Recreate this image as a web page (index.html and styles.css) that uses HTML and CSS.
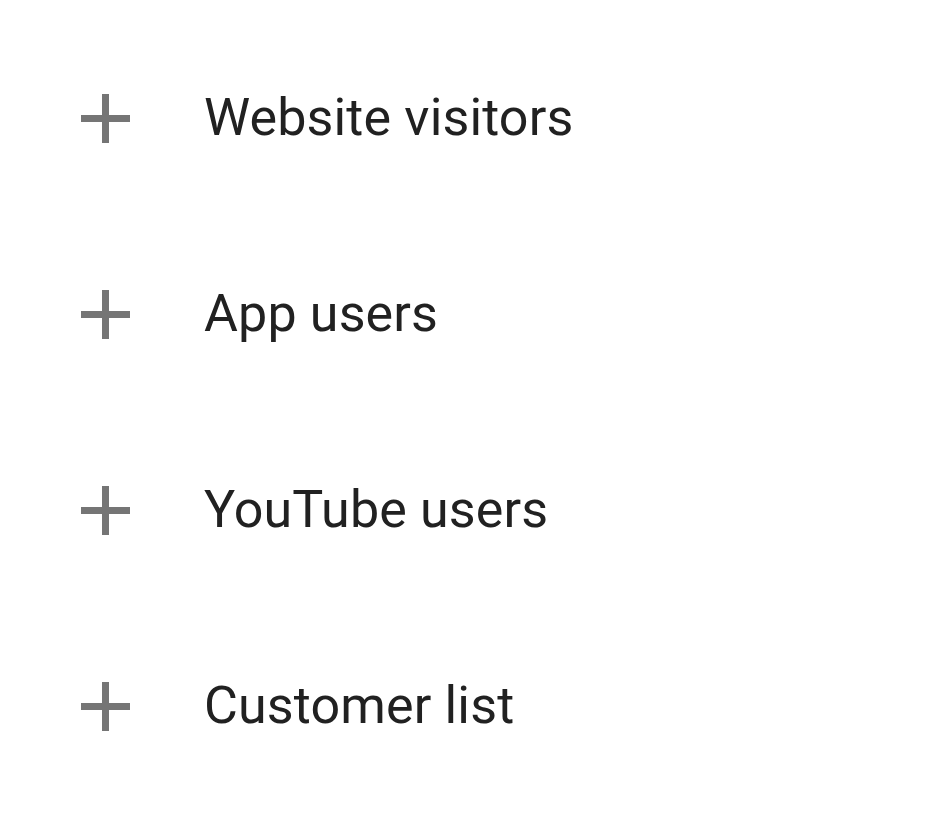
FILE: index.html
```html
<!DOCTYPE html>
<html lang="en">

<head>
    <meta charset="UTF-8">
    <meta name="viewport" content="width=device-width, initial-scale=1.0">
    <title>Audiences</title>
    <link rel="stylesheet" href="styles.css">
</head>

<body>
    <ul class="audience-list">
        <li class="audience-item">
            <svg class="add-icon" viewBox="0 0 49 49"><path d="M21 0h7v21h21v7H28v21h-7V28H0v-7h21z" /></svg>
            <span class="audience-label">Website visitors</span>
        </li>
        <li class="audience-item">
            <svg class="add-icon" viewBox="0 0 49 49"><path d="M21 0h7v21h21v7H28v21h-7V28H0v-7h21z" /></svg>
            <span class="audience-label">App users</span>
        </li>
        <li class="audience-item">
            <svg class="add-icon" viewBox="0 0 49 49"><path d="M21 0h7v21h21v7H28v21h-7V28H0v-7h21z" /></svg>
            <span class="audience-label">YouTube users</span>
        </li>
        <li class="audience-item">
            <svg class="add-icon" viewBox="0 0 49 49"><path d="M21 0h7v21h21v7H28v21h-7V28H0v-7h21z" /></svg>
            <span class="audience-label">Customer list</span>
        </li>
    </ul>
</body>

</html>
```

FILE: styles.css
```css
* {
    margin: 0;
    padding: 0;
    box-sizing: border-box;
}

body {
    background: #fff;
    font-family: Roboto, "Noto Sans", sans-serif;
}

.audience-list {
    list-style: none;
    padding: 20px 0 0 81px;
}

.audience-item {
    display: flex;
    align-items: center;
    gap: 74px;
    height: 196px;
}

.add-icon {
    width: 49px;
    height: 49px;
    fill: #757575;
    flex-shrink: 0;
}

.audience-label {
    font-size: 52px;
    letter-spacing: 0.15px;
    color: #212121;
    line-height: 1;
}
```
